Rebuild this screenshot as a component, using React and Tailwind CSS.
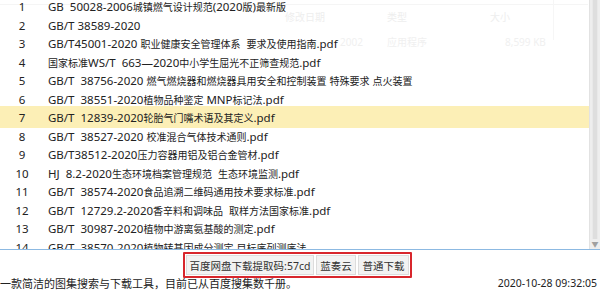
import React from "react";

const rows = [
  "GB  50028-2006城镇燃气设计规范(2020版)最新版",
  "GB/T 38589-2020",
  "GB/T45001-2020 职业健康安全管理体系  要求及使用指南.pdf",
  "国家标准WS/T  663—2020中小学生屈光不正筛查规范.pdf",
  "GB/T  38756-2020 燃气燃烧器和燃烧器具用安全和控制装置 特殊要求 点火装置",
  "GB/T  38551-2020植物品种鉴定 MNP标记法.pdf",
  "GB/T  12839-2020轮胎气门嘴术语及其定义.pdf",
  "GB/T  38527-2020 校准混合气体技术通则.pdf",
  "GB/T38512-2020压力容器用铝及铝合金管材.pdf",
  "HJ  8.2-2020生态环境档案管理规范  生态环境监测.pdf",
  "GB/T  38574-2020食品追溯二维码通用技术要求标准.pdf",
  "GB/T  12729.2-2020香辛料和调味品  取样方法国家标准.pdf",
  "GB/T  30987-2020植物中游离氨基酸的测定.pdf",
  "GB/T  38570-2020植物转基因成分测定 目标序列测序法",
];

const font = {
  fontFamily: '"Noto Sans", "Noto Sans CJK SC", sans-serif',
};

function Mixed({ text }) {
  const parts = text.split(/([\u3000-\u303f\u4e00-\u9fff\uff00-\uffef]+)/);
  return (
    <>
      {parts.map((p, i) =>
        i % 2 === 1 ? (
          <span key={i} className="text-[10px]">
            {p}
          </span>
        ) : (
          <span key={i}>{p}</span>
        )
      )}
    </>
  );
}

export default function App() {
  return (
    <div
      className="w-[600px] h-[294px] bg-white overflow-hidden relative text-[#222] text-[11.5px]"
      style={font}
    >
      <div className="h-[250px] border-b border-[#8cb9e2] flex relative">
        <div className="absolute left-0 right-[12px] top-[4px] h-px bg-[#f5f5f5]" />
        <div className="absolute left-[553px] top-0 h-[40px] w-px bg-[#f6f6f6]" />
        <div className="absolute left-[285px] top-[10px] text-[10px] text-[#eeeeee]">修改日期</div>
        <div className="absolute left-[387px] top-[10px] text-[10px] text-[#eeeeee]">类型</div>
        <div className="absolute left-[490px] top-[10px] text-[10px] text-[#eeeeee]">大小</div>
        <div className="absolute left-[340px] top-[35px] text-[10px] text-[#f0f0f0]">2002</div>
        <div className="absolute left-[387px] top-[35px] text-[10px] text-[#f0f0f0]">应用程序</div>
        <div className="absolute left-[505px] top-[35px] text-[10px] text-[#f0f0f0]">8,599 KB</div>
        <div className="flex-1 overflow-hidden relative">
          <div className="mt-[-2px]">
            {rows.map((r, i) => (
              <div
                key={i}
                className="h-[18.5px] leading-[18.5px] flex relative whitespace-pre"
              >
                {i === 6 && (
                  <div className="absolute left-0 right-0 top-[-3px] bottom-0 bg-[#fcefb6]" />
                )}
                <div className="w-[44px] text-center relative">{i + 1}</div>
                <div className="pl-[4px] relative">
                  <Mixed text={r} />
                </div>
              </div>
            ))}
          </div>
        </div>
        <div className="w-[11px] border-l border-[#e2e2e2] bg-[#eeeeee] flex flex-col relative">
          <div className="flex-1 mx-[2px] bg-[#dedede] border-x border-[#e9e9e9]" />
          <div className="h-[10px] flex items-center justify-center text-[7px] text-[#a0a0a0] leading-none">
            ▼
          </div>
        </div>
      </div>
      <div className="flex pl-[183px] pt-[2px]">
        <div className="flex gap-[2px] border-2 border-[#d8262c] p-[1px] rounded-[1px] text-[10.5px] text-[#333]">
          <div className="w-[128px] h-[20px] leading-[20px] text-center bg-[#f2f2f2] border border-[#dcdcdc] whitespace-nowrap">
            百度网盘下载提取码:57cd
          </div>
          <div className="w-[40px] h-[20px] leading-[20px] text-center bg-[#f2f2f2] border border-[#dcdcdc] whitespace-nowrap">
            蓝奏云
          </div>
          <div className="w-[51px] h-[20px] leading-[20px] text-center bg-[#f2f2f2] border border-[#dcdcdc] whitespace-nowrap">
            普通下载
          </div>
        </div>
      </div>
      <div className="flex justify-between items-center pr-[3px] h-[16px] mt-[-2px]">
        <div className="text-[11px]">一款简洁的图集搜索与下载工具，目前已从百度搜集数千册。</div>
        <div className="text-[10.5px]">2020-10-28 09:32:05</div>
      </div>
    </div>
  );
}
